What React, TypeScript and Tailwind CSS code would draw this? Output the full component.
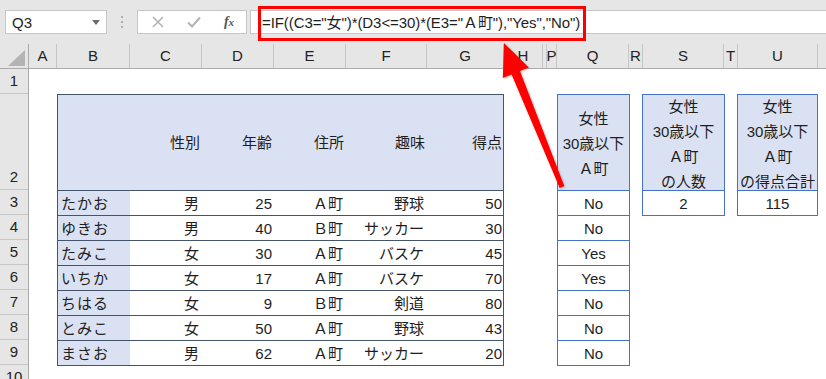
import React from "react";

const FONT = "font-['Liberation_Sans','Noto_Sans_CJK_JP',sans-serif]";

type Row = { name: string; sex: string; age: string; town: string; hobby: string; score: string; q: string };
const rows: Row[] = [
  { name: "たかお", sex: "男", age: "25", town: "Ａ町", hobby: "野球", score: "50", q: "No" },
  { name: "ゆきお", sex: "男", age: "40", town: "Ｂ町", hobby: "サッカー", score: "30", q: "No" },
  { name: "たみこ", sex: "女", age: "30", town: "Ａ町", hobby: "バスケ", score: "45", q: "Yes" },
  { name: "いちか", sex: "女", age: "17", town: "Ａ町", hobby: "バスケ", score: "70", q: "Yes" },
  { name: "ちはる", sex: "女", age: "9", town: "Ｂ町", hobby: "剣道", score: "80", q: "No" },
  { name: "とみこ", sex: "女", age: "50", town: "Ａ町", hobby: "野球", score: "43", q: "No" },
  { name: "まさお", sex: "男", age: "62", town: "Ａ町", hobby: "サッカー", score: "20", q: "No" },
];

const colHeaders: { label: string; w: string }[] = [
  { label: "A", w: "w-[28px]" },
  { label: "B", w: "w-[73px]" },
  { label: "C", w: "w-[72px]" },
  { label: "D", w: "w-[72px]" },
  { label: "E", w: "w-[72px]" },
  { label: "F", w: "w-[81px]" },
  { label: "G", w: "w-[77px]" },
  { label: "H", w: "w-[39px]" },
  { label: "", w: "w-[4px]" },
  { label: "P", w: "w-[10px]" },
  { label: "Q", w: "w-[72px]" },
  { label: "R", w: "w-[14px]" },
  { label: "S", w: "w-[81px]" },
  { label: "T", w: "w-[14px]" },
  { label: "U", w: "w-[80px]" },
];

const rowNums: { n: string; h: string }[] = [
  { n: "1", h: "h-[25px]" },
  { n: "2", h: "h-[96px]" },
  { n: "3", h: "h-[25px]" },
  { n: "4", h: "h-[25px]" },
  { n: "5", h: "h-[25px]" },
  { n: "6", h: "h-[25px]" },
  { n: "7", h: "h-[25px]" },
  { n: "8", h: "h-[25px]" },
  { n: "9", h: "h-[25px]" },
  { n: "10", h: "h-[25px]" },
];

function Cell({ w, children, className = "" }: { w: string; children?: React.ReactNode; className?: string }) {
  return <div className={`${w} h-full flex items-center pt-[2px] ${className}`}>{children}</div>;
}

export default function App() {
  return (
    <div className={`relative w-[826px] h-[379px] overflow-hidden bg-white text-[15px] text-[#1e1e1e] ${FONT}`}>
      {/* Formula bar */}
      <div className="h-[44px] bg-[#e6e6e6] flex items-start pt-[10px] pl-[5px]">
        <div className="w-[102px] h-[24px] bg-white border border-[#c6c6c6] flex items-center pl-[6px] pr-[6px]">
          <span className="flex-1 text-[15px] leading-none">Q3</span>
          <svg width="8" height="5" viewBox="0 0 8 5"><path d="M0 0H8L4 5Z" fill="#6d6d6d" /></svg>
        </div>
        <div className="w-[30px] h-[24px] flex flex-col items-center justify-center gap-[3px]">
          <div className="w-[2px] h-[2px] bg-[#b0b0b0]" />
          <div className="w-[2px] h-[2px] bg-[#b0b0b0]" />
          <div className="w-[2px] h-[2px] bg-[#b0b0b0]" />
        </div>
        <div className="w-[110px] h-[24px] bg-white border border-[#c6c6c6] flex items-center">
          <div className="w-[38px] flex justify-center pl-[2px]">
            <svg width="12" height="12" viewBox="0 0 12 12"><path d="M1 1L11 11M11 1L1 11" stroke="#b3b3b3" strokeWidth="1.6" /></svg>
          </div>
          <div className="w-[36px] flex justify-center">
            <svg width="14" height="12" viewBox="0 0 14 12"><path d="M1 6.5L5 10.5L13 1.5" stroke="#b3b3b3" strokeWidth="2" fill="none" /></svg>
          </div>
          <div className="w-[34px] flex justify-center">
            <span className="font-['Liberation_Serif',serif] italic font-bold text-[14px] text-[#555] leading-none">f<span className="text-[11px]">x</span></span>
          </div>
        </div>
        <div className="ml-[3px] flex-1 h-[24px] bg-white border border-[#c6c6c6] border-r-0 flex items-center pl-[11px]">
          <span className="text-[15px] leading-none tracking-[-0.08px] whitespace-nowrap">=IF((C3="女")*(D3&lt;=30)*(E3="Ａ町"),"Yes","No")</span>
        </div>
      </div>

      {/* Column headers */}
      <div className="flex h-[25px] bg-[#e6e6e6] border-b border-[#ababab] text-[#222]">
        <div className="w-[29px] h-full border-r border-[#ababab] relative">
          <svg className="absolute left-[8px] top-[6px]" width="17" height="16" viewBox="0 0 17 16"><path d="M17 0V16H0Z" fill="#b4b4b4" /></svg>
        </div>
        {colHeaders.map((c, i) => (
          <div key={i} className={`${c.w} shrink-0 h-full border-r border-[#c6c6c6] flex items-center justify-center pt-[1px]`}>
            {c.label}
          </div>
        ))}
        <div className="flex-1" />
      </div>

      {/* Body */}
      <div className="flex">
        <div className="w-[29px] shrink-0 bg-[#e6e6e6] border-r border-[#ababab] text-[#222]">
          {rowNums.map((r) => (
            <div key={r.n} className={`${r.h} border-b border-[#c6c6c6] flex flex-col justify-end`}>
              <div className="h-[24px] flex items-center justify-center pt-[1px]">{r.n}</div>
            </div>
          ))}
        </div>

        <div className="pt-[25px] pl-[28px] flex items-start">
          {/* Main table */}
          <div className="w-[447px] border-l border-r border-t border-[#44546a]">
            <div className="h-[96px] border-b border-[#44546a] bg-[#dae1f3] flex">
              <Cell w="w-[72px]" />
              <Cell w="w-[72px]" className="justify-end pr-[2px]">性別</Cell>
              <Cell w="w-[72px]" className="justify-end pr-[2px]">年齢</Cell>
              <Cell w="w-[72px]" className="justify-end pr-[2px]">住所</Cell>
              <Cell w="w-[81px]" className="justify-end pr-[2px]">趣味</Cell>
              <Cell w="w-[76px]" className="justify-end pr-[1px]">得点</Cell>
            </div>
            {rows.map((r) => (
              <div key={r.name} className="h-[25px] border-b border-[#44546a] flex">
                <Cell w="w-[72px]" className="bg-[#dae1f3] pl-[3px] tracking-[1px]">{r.name}</Cell>
                <Cell w="w-[72px]" className="justify-end pr-[3px]">{r.sex}</Cell>
                <Cell w="w-[72px]" className="justify-end pr-[2px]">{r.age}</Cell>
                <Cell w="w-[72px]" className="justify-end pr-[3px]">{r.town}</Cell>
                <Cell w="w-[81px]" className="justify-end pr-[3px]">{r.hobby}</Cell>
                <Cell w="w-[76px]" className="justify-end pr-[1px]">{r.score}</Cell>
              </div>
            ))}
          </div>

          {/* Q table */}
          <div className="ml-[53px] w-[73px] border-l border-r border-t border-[#4472c4]">
            <div className="h-[96px] border-b border-[#4472c4] bg-[#dae1f3] flex flex-col items-center justify-center leading-[25px] pt-[2px]">
              <div>女性</div>
              <div>30歳以下</div>
              <div>Ａ町</div>
            </div>
            {rows.map((r) => (
              <div key={r.name} className="h-[25px] border-b border-[#4472c4] flex items-center justify-center pt-[2px]">
                {r.q}
              </div>
            ))}
          </div>

          {/* S table */}
          <div className="ml-[12px] w-[83px] border-l border-r border-t border-[#4472c4]">
            <div className="h-[96px] border-b border-[#4472c4] bg-[#dae1f3] flex flex-col items-center justify-center leading-[25px] pt-[2px]">
              <div>女性</div>
              <div>30歳以下</div>
              <div>Ａ町</div>
              <div>の人数</div>
            </div>
            <div className="h-[25px] border-b border-[#4472c4] flex items-center justify-center pt-[2px]">2</div>
          </div>

          {/* U table */}
          <div className="ml-[12px] w-[81px] border-l border-r border-t border-[#4472c4]">
            <div className="h-[96px] border-b border-[#4472c4] bg-[#dae1f3] flex flex-col items-center justify-center leading-[25px] pt-[2px]">
              <div>女性</div>
              <div>30歳以下</div>
              <div>Ａ町</div>
              <div className="whitespace-nowrap">の得点合計</div>
            </div>
            <div className="h-[25px] border-b border-[#4472c4] flex items-center justify-center pt-[2px]">115</div>
          </div>
        </div>
      </div>

      {/* Red highlight box */}
      <div className="absolute left-[258px] top-[6px] w-[328px] h-[35px] border-[3px] border-[#ff0000] pointer-events-none" />

      {/* Red arrow */}
      <svg className="absolute left-0 top-0 pointer-events-none" width="826" height="379" viewBox="0 0 826 379">
        <defs>
          <filter id="sh" x="-20%" y="-20%" width="140%" height="140%">
            <feDropShadow dx="1" dy="1" stdDeviation="1" floodColor="#000" floodOpacity="0.25" />
          </filter>
        </defs>
        <polygon
          points="504,43 528.8,67.6 520,71.1 564.3,186.1 559.7,187.9 511.6,74.5 502.8,78"
          fill="#ff0000"
          filter="url(#sh)"
        />
      </svg>
    </div>
  );
}
